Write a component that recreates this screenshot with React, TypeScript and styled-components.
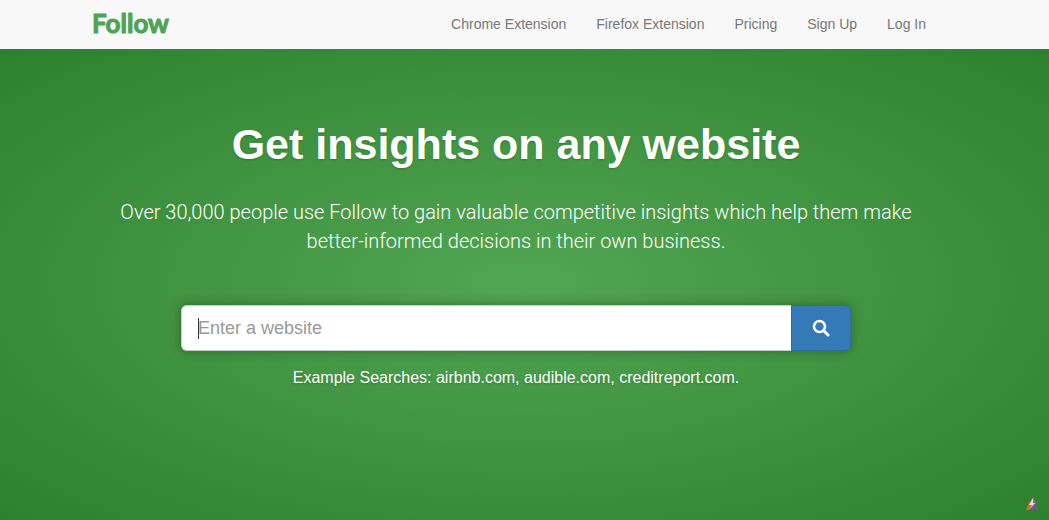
import React from "react";
import styled, { createGlobalStyle } from "styled-components";

const GlobalStyle = createGlobalStyle`
  *, *::before, *::after { box-sizing: border-box; }
  html, body, #root { height: 100%; }
  body {
    margin: 0;
    font-family: "Liberation Sans", Arial, sans-serif;
    font-size: 14px;
    line-height: 20px;
  }
`;

const Page = styled.div`
  display: flex;
  flex-direction: column;
  min-height: 100%;
`;

const Header = styled.header`
  background: #f8f8f8;
  padding-right: 17px;
`;

const HeaderInner = styled.div`
  display: flex;
  align-items: center;
  justify-content: space-between;
  max-width: 850px;
  margin: 0 auto;
`;

const Brand = styled.a`
  display: flex;
  text-decoration: none;
`;

const Wordmark = styled.svg`
  display: block;
  width: 90px;
  height: 40px;
  fill: #4fa354;
  stroke: #4fa354;
  stroke-width: 1;
  stroke-linejoin: round;
  font-family: Lato, sans-serif;
  font-size: 26px;
  font-weight: 700;
`;

const Nav = styled.nav`
  display: flex;
`;

const NavLink = styled.a`
  padding: 14px 15px 15px;
  color: #777;
  text-decoration: none;
`;

const Hero = styled.main`
  flex: 1;
  display: flex;
  flex-direction: column;
  align-items: center;
  padding: 64px 17px 64px 0;
  color: #fff;
  text-align: center;
  background: radial-gradient(ellipse at center, #52a552 0%, #2d802d 100%);
`;

const Title = styled.h1`
  margin: 0;
  font-size: 43px;
  line-height: 62px;
  font-weight: 700;
  text-shadow: 0 1px 2px rgba(0, 0, 0, 0.2);
`;

const Lead = styled.p`
  max-width: 810px;
  margin: 23px 0 0;
  font-family: Roboto, "Liberation Sans", sans-serif;
  font-size: 20px;
  font-weight: 300;
  line-height: 29px;
`;

const SearchForm = styled.form`
  display: flex;
  width: 100%;
  max-width: 670px;
  height: 46px;
  margin-top: 49px;
  border-radius: 6px;
  box-shadow: 0 0 12px rgba(0, 0, 0, 0.3);
`;

const Field = styled.label`
  position: relative;
  flex: 1;
  display: flex;

  &::before {
    content: "";
    position: absolute;
    left: 17px;
    top: 13px;
    width: 1px;
    height: 21px;
    background: #333;
  }
`;

const SearchInput = styled.input`
  flex: 1;
  min-width: 0;
  padding: 0 16px;
  border: 1px solid #ccc;
  border-right: 0;
  border-radius: 6px 0 0 6px;
  outline: 0;
  background: #fff;
  color: #555;
  font: 18px "Liberation Sans", Arial, sans-serif;

  &::placeholder { color: #999; opacity: 1; }
`;

const SearchButton = styled.button`
  display: flex;
  align-items: center;
  justify-content: center;
  width: 60px;
  padding: 0;
  border: 1px solid #2e6da4;
  border-radius: 0 6px 6px 0;
  background: #337ab7;
  color: #fff;
  cursor: pointer;
`;

const Examples = styled.p`
  margin: 16px 0 0;
  font-size: 16px;
  line-height: 22px;
  text-shadow: 0 1px 2px rgba(0, 0, 0, 0.2);
`;

const ExampleLink = styled.a`
  color: #fff;
  text-decoration: none;
`;

const Badge = styled.a`
  position: fixed;
  right: 10px;
  bottom: 9px;
  width: 14px;
  height: 14px;

  svg { display: block; }
`;

const links = ["Chrome Extension", "Firefox Extension", "Pricing", "Sign Up", "Log In"];
const examples = ["airbnb.com", "audible.com", "creditreport.com"];

export default function App() {
  return (
    <Page>
      <GlobalStyle />
      <Header>
        <HeaderInner>
          <Brand href="#">
            <Wordmark viewBox="0 0 90 40">
              <text x="1" y="28">Follow</text>
            </Wordmark>
          </Brand>
          <Nav>
            {links.map((label) => (
              <NavLink key={label} href="#">{label}</NavLink>
            ))}
          </Nav>
        </HeaderInner>
      </Header>
      <Hero>
        <Title>Get insights on any website</Title>
        <Lead>
          Over 30,000 people use Follow to gain valuable competitive insights which help them make
          better-informed decisions in their own business.
        </Lead>
        <SearchForm onSubmit={(e) => e.preventDefault()}>
          <Field>
            <SearchInput type="text" aria-label="Website" placeholder="Enter a website" />
          </Field>
          <SearchButton type="submit" aria-label="Search">
            <svg width="18" height="18" viewBox="0 0 18 18" fill="none" stroke="currentColor">
              <circle cx="7.5" cy="7.5" r="5.5" strokeWidth="2.5" />
              <path d="M11.8 11.8 16 16" strokeWidth="3" strokeLinecap="round" />
            </svg>
          </SearchButton>
        </SearchForm>
        <Examples>
          Example Searches:{" "}
          {examples.map((site, i) => (
            <React.Fragment key={site}>
              <ExampleLink href="#">{site}</ExampleLink>
              {i < examples.length - 1 ? ", " : "."}
            </React.Fragment>
          ))}
        </Examples>
      </Hero>
      <Badge href="#" aria-label="Extension">
        <svg width="14" height="14" viewBox="0 0 14 14">
          <path d="M8 0 11 7 3 7Z" fill="#b96a58" />
          <path d="M4 5 7 8 5 13H1Z" fill="#c9703c" />
          <path d="M9 5 13 12H6Z" fill="#7b4fa5" />
          <path d="M8 1 4 8H7L5 12 10 6H8Z" fill="#dcdcd0" />
        </svg>
      </Badge>
    </Page>
  );
}
